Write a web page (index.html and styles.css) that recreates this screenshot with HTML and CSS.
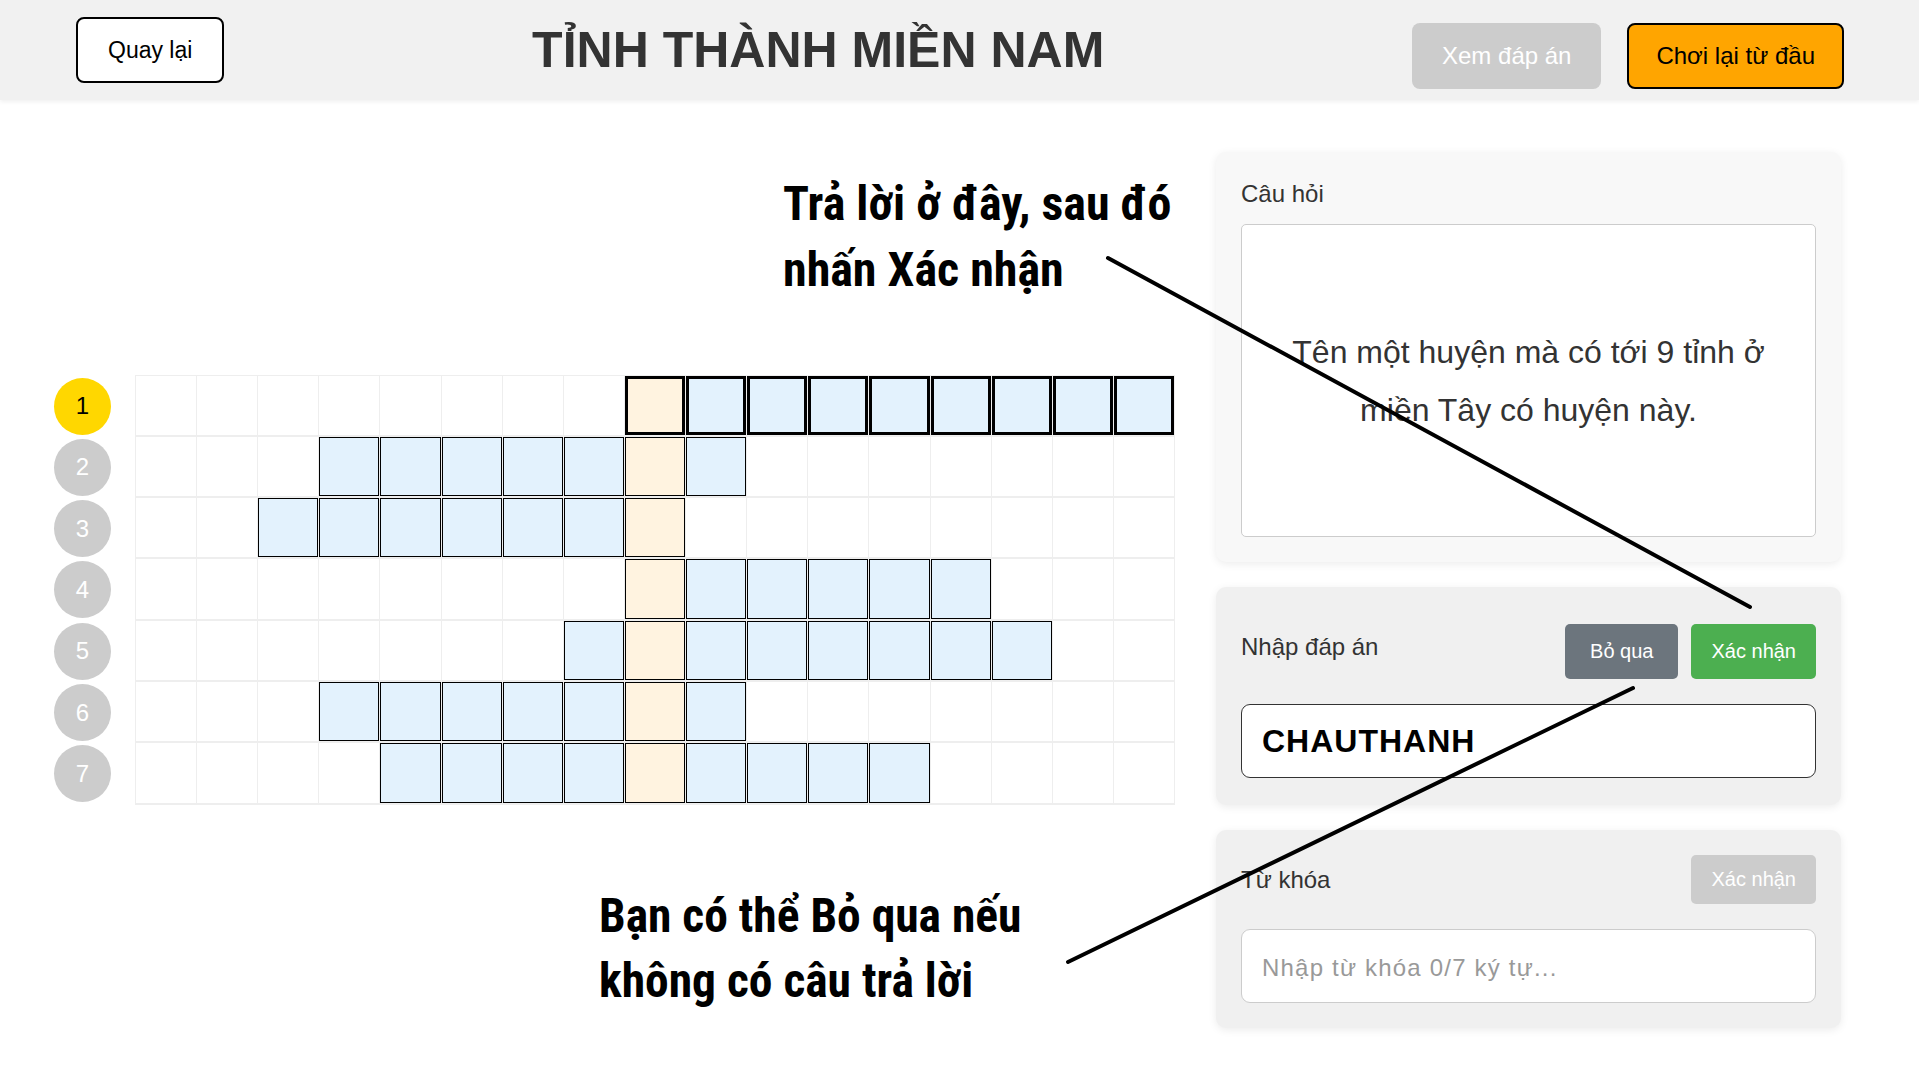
FILE: index.html
```html
<!DOCTYPE html>
<html lang="vi">
<head>
<meta charset="utf-8">
<title>Tỉnh thành miền Nam</title>
<link rel="stylesheet" href="styles.css">
</head>
<body>
<header class="topbar">
  <button class="btn btn-back">Quay lại</button>
  <h1 class="title">TỈNH THÀNH MIỀN NAM</h1>
  <div class="top-actions">
    <button class="btn btn-show">Xem đáp án</button>
    <button class="btn btn-restart">Chơi lại từ đầu</button>
  </div>
</header>

<main class="main">
  <section class="board">
    <div class="row active">
      <div class="num num-active">1</div>
      <div class="cells">
        <div class="c"></div><div class="c"></div><div class="c"></div><div class="c"></div><div class="c"></div><div class="c"></div><div class="c"></div><div class="c"></div>
        <div class="c k"></div>
        <div class="c f"></div><div class="c f"></div><div class="c f"></div><div class="c f"></div><div class="c f"></div><div class="c f"></div><div class="c f"></div><div class="c f"></div>
      </div>
    </div>
    <div class="row">
      <div class="num">2</div>
      <div class="cells">
        <div class="c"></div><div class="c"></div><div class="c"></div>
        <div class="c f"></div><div class="c f"></div><div class="c f"></div><div class="c f"></div><div class="c f"></div>
        <div class="c k"></div>
        <div class="c f"></div>
        <div class="c"></div><div class="c"></div><div class="c"></div><div class="c"></div><div class="c"></div><div class="c"></div><div class="c"></div>
      </div>
    </div>
    <div class="row">
      <div class="num">3</div>
      <div class="cells">
        <div class="c"></div><div class="c"></div>
        <div class="c f"></div><div class="c f"></div><div class="c f"></div><div class="c f"></div><div class="c f"></div><div class="c f"></div>
        <div class="c k"></div>
        <div class="c"></div><div class="c"></div><div class="c"></div><div class="c"></div><div class="c"></div><div class="c"></div><div class="c"></div><div class="c"></div>
      </div>
    </div>
    <div class="row">
      <div class="num">4</div>
      <div class="cells">
        <div class="c"></div><div class="c"></div><div class="c"></div><div class="c"></div><div class="c"></div><div class="c"></div><div class="c"></div><div class="c"></div>
        <div class="c k"></div>
        <div class="c f"></div><div class="c f"></div><div class="c f"></div><div class="c f"></div><div class="c f"></div>
        <div class="c"></div><div class="c"></div><div class="c"></div>
      </div>
    </div>
    <div class="row">
      <div class="num">5</div>
      <div class="cells">
        <div class="c"></div><div class="c"></div><div class="c"></div><div class="c"></div><div class="c"></div><div class="c"></div><div class="c"></div>
        <div class="c f"></div>
        <div class="c k"></div>
        <div class="c f"></div><div class="c f"></div><div class="c f"></div><div class="c f"></div><div class="c f"></div><div class="c f"></div>
        <div class="c"></div><div class="c"></div>
      </div>
    </div>
    <div class="row">
      <div class="num">6</div>
      <div class="cells">
        <div class="c"></div><div class="c"></div><div class="c"></div>
        <div class="c f"></div><div class="c f"></div><div class="c f"></div><div class="c f"></div><div class="c f"></div>
        <div class="c k"></div>
        <div class="c f"></div>
        <div class="c"></div><div class="c"></div><div class="c"></div><div class="c"></div><div class="c"></div><div class="c"></div><div class="c"></div>
      </div>
    </div>
    <div class="row">
      <div class="num">7</div>
      <div class="cells">
        <div class="c"></div><div class="c"></div><div class="c"></div><div class="c"></div>
        <div class="c f"></div><div class="c f"></div><div class="c f"></div><div class="c f"></div>
        <div class="c k"></div>
        <div class="c f"></div><div class="c f"></div><div class="c f"></div><div class="c f"></div>
        <div class="c"></div><div class="c"></div><div class="c"></div><div class="c"></div>
      </div>
    </div>
  </section>

  <aside class="side">
    <div class="card card-question">
      <div class="card-label">Câu hỏi</div>
      <div class="question-box">
        <p class="question-text">Tên một huyện mà có tới 9 tỉnh ở miền Tây có huyện này.</p>
      </div>
    </div>

    <div class="card card-answer">
      <div class="card-head">
        <div class="card-label label-up">Nhập đáp án</div>
        <div class="card-actions">
          <button class="btn-sm btn-skip">Bỏ qua</button>
          <button class="btn-sm btn-confirm">Xác nhận</button>
        </div>
      </div>
      <input class="field field-answer" type="text" value="CHAUTHANH">
    </div>

    <div class="card card-keyword">
      <div class="card-head">
        <div class="card-label">Từ khóa</div>
        <button class="btn-sm btn-disabled">Xác nhận</button>
      </div>
      <input class="field field-keyword" type="text" placeholder="Nhập từ khóa 0/7 ký tự...">
    </div>
  </aside>
</main>

<div class="note note-1">Trả lời ở đây, sau đó<br>nhấn Xác nhận</div>
<div class="note note-2">Bạn có thể Bỏ qua nếu<br>không có câu trả lời</div>

<svg class="arrows" width="1919" height="1079" viewBox="0 0 1919 1079">
  <line x1="1108" y1="258" x2="1750" y2="607" stroke="#000" stroke-width="4" stroke-linecap="round"/>
  <line x1="1068" y1="962" x2="1633" y2="688" stroke="#000" stroke-width="4" stroke-linecap="round"/>
</svg>
</body>
</html>
```

FILE: styles.css
```css
* { box-sizing: border-box; }

html, body {
  margin: 0;
  padding: 0;
  background: #fff;
  font-family: "Liberation Sans", Arial, sans-serif;
  color: #333;
}

body {
  position: relative;
  width: 1919px;
  height: 1079px;
  overflow: hidden;
}

/* ---------- header ---------- */
.topbar {
  height: 100px;
  background: #f1f1f1;
  box-shadow: 0 2px 4px rgba(0, 0, 0, 0.06);
  display: flex;
  align-items: center;
  justify-content: space-between;
  padding: 0 75px 0 76px;
  position: relative;
  z-index: 1;
}

.btn {
  height: 66px;
  display: inline-flex;
  align-items: center;
  justify-content: center;
  padding: 0 30px;
  border-radius: 8px;
  font-family: "Liberation Sans", Arial, sans-serif;
  font-size: 24px;
  cursor: pointer;
}

.btn-back {
  background: #fff;
  border: 2px solid #000;
  color: #000;
  font-size: 23px;
}

.title {
  margin: 0;
  font-size: 50px;
  font-weight: bold;
  color: #333;
  line-height: 1;
}

.top-actions {
  display: flex;
  gap: 26px;
  margin-top: 12px;
}

.btn-show {
  background: #ccc;
  border: none;
  color: #fff;
  padding: 0 30px;
}

.btn-restart {
  background: #ffa500;
  border: 2px solid #000;
  color: #000;
  padding: 0 27px;
}

/* ---------- main ---------- */
.main {
  display: flex;
  align-items: center;
  gap: 41px;
  padding: 52px 78px 0 54px;
}

.board {
  display: flex;
  flex-direction: column;
}

.row {
  display: flex;
  align-items: center;
  height: 61.3px;
}

.num {
  width: 57px;
  height: 57px;
  border-radius: 50%;
  background: #ccc;
  color: #fff;
  font-size: 24px;
  display: flex;
  align-items: center;
  justify-content: center;
  margin-right: 24px;
  flex: none;
}

.num-active {
  background: #ffd700;
  color: #000;
}

.cells {
  display: grid;
  grid-template-columns: repeat(17, 1fr);
  width: 1040px;
  height: 61.3px;
  border-left: 1px solid #eee;
}

.row:first-child .cells { border-top: 1px solid #eee; }

.c {
  border-right: 1px solid #eee;
  border-bottom: 2px solid #eee;
  background: #fff;
}

.f {
  background: #e3f2fd;
  box-shadow: inset 0 0 0 1px #000;
}

.k {
  background: #fff3e0;
  box-shadow: inset 0 0 0 1px #000;
}

.active .f,
.active .k {
  box-shadow: inset 0 0 0 3px #000;
}

/* ---------- side panel ---------- */
.side {
  width: 625px;
  display: flex;
  flex-direction: column;
  gap: 25px;
}

.card {
  border-radius: 10px;
  box-shadow: 0 2px 8px rgba(0, 0, 0, 0.08);
  padding: 25px;
}

.card-question { background: #f8f8f8; }
.card-answer { background: #f0f0f0; padding-top: 37px; padding-bottom: 27px; }
.card-keyword { background: #f0f0f0; }

.card-label {
  font-size: 24px;
  line-height: 33px;
  color: #333;
}

.label-up {
  margin-bottom: 10px;
}

.question-box {
  margin-top: 14px;
  height: 313px;
  background: #fff;
  border: 1px solid #ccc;
  border-radius: 5px;
  padding: 0 20px;
  display: flex;
  align-items: center;
  justify-content: center;
}

.question-text {
  margin: 0;
  text-align: center;
  font-size: 32px;
  line-height: 58px;
  color: #333;
}

.card-head {
  display: flex;
  align-items: center;
  justify-content: space-between;
  margin-bottom: 25px;
}

.card-actions {
  display: flex;
  gap: 13px;
}

.btn-sm {
  height: 55px;
  border: none;
  border-radius: 5px;
  color: #fff;
  font-family: "Liberation Sans", Arial, sans-serif;
  font-size: 20px;
  padding: 0 20px;
  cursor: pointer;
}

.btn-skip { background: #6c757d; padding: 0 25px; }
.btn-confirm { background: #4caf50; }
.btn-disabled { background: #ccc; height: 49px; padding: 0 20px; }

.field {
  display: block;
  width: 100%;
  height: 74px;
  background: #fff;
  border-radius: 9px;
  padding: 0 20px;
  font-family: "Liberation Sans", Arial, sans-serif;
  outline: none;
}

.field-answer {
  border: 1px solid #333;
  font-size: 32px;
  font-weight: bold;
  letter-spacing: 1px;
  color: #000;
}

.field-keyword {
  border: 1px solid #ccc;
  font-size: 24px;
  letter-spacing: 1.2px;
  padding-top: 4px;
  color: #333;
}

.field-keyword::placeholder {
  color: #999;
}

/* ---------- annotations ---------- */
.note {
  position: absolute;
  font-family: "Liberation Sans Narrow", "Roboto Condensed", "DejaVu Sans Condensed", "Liberation Sans", sans-serif;
  font-weight: bold;
  font-size: 48px;
  color: #000;
  white-space: nowrap;
  z-index: 2;
}

.note-1 {
  left: 783px;
  top: 171px;
  line-height: 66px;
}

.note-2 {
  left: 599px;
  top: 884px;
  font-size: 47.5px;
  line-height: 65px;
}

.arrows {
  position: absolute;
  left: 0;
  top: 0;
  pointer-events: none;
  z-index: 3;
}
```
